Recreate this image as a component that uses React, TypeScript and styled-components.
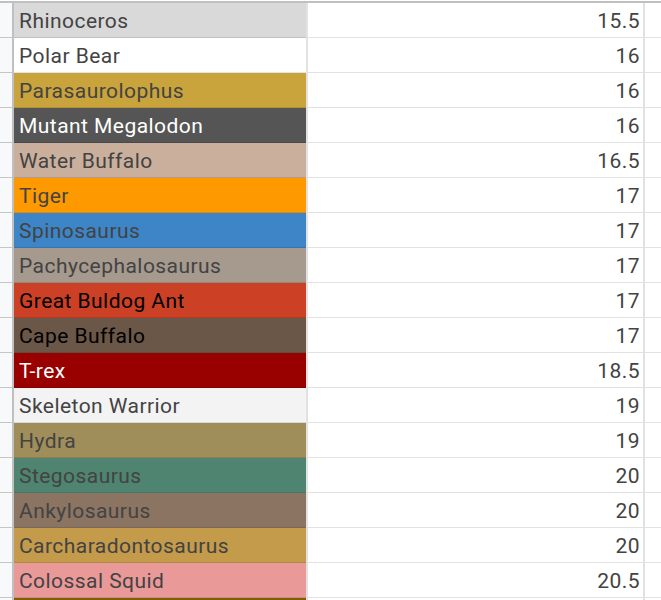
import { createGlobalStyle, styled } from "styled-components";

const GlobalStyle = createGlobalStyle`
  html, body {
    margin: 0;
    padding: 0;
    background: #ffffff;
    overflow: hidden;
  }
  body {
    font-family: Roboto, "Liberation Sans", Arial, sans-serif;
  }
`;

const Sheet = styled.div`
  width: 661px;
  height: 600px;
  overflow: hidden;
  padding-top: 1px;
  box-sizing: border-box;
  background: #ffffff;
`;

const TopRule = styled.div`
  height: 2px;
  background: #c0c0c0;
`;

const Row = styled.div`
  display: grid;
  grid-template-columns: 14px 292px 339px 1fr;
  height: 35px;
`;

const RowHead = styled.div`
  background: #f8f9fa;
  border-right: 2px solid #c0c0c0;
  border-bottom: 1px solid #c4c7c5;
`;

const Text = `
  font-size: 21px;
  letter-spacing: 0.45px;
  padding-top: 2px;
  box-sizing: border-box;
  white-space: nowrap;
  overflow: hidden;
`;

const NameCell = styled.div<{ $bg: string; $ink: string }>`
  ${Text}
  background: ${(p) => p.$bg};
  color: ${(p) => p.$ink};
  border-bottom: 1px solid rgba(0, 0, 0, 0.11);
  display: flex;
  align-items: center;
  padding-left: 5px;
`;

const ValueCell = styled.div`
  ${Text}
  color: #434343;
  border-left: 2px solid #e2e2e2;
  border-right: 2px solid #e2e2e2;
  border-bottom: 1px solid #e2e2e2;
  display: flex;
  align-items: center;
  justify-content: flex-end;
  padding-right: 3px;
`;

const Spare = styled.div`
  border-bottom: 1px solid #e2e2e2;
`;

type Animal = { name: string; value: string; bg: string; ink?: string };

const animals: Animal[] = [
  { name: "Rhinoceros", value: "15.5", bg: "#d9d9d9" },
  { name: "Polar Bear", value: "16", bg: "#ffffff" },
  { name: "Parasaurolophus", value: "16", bg: "#c9a33b" },
  { name: "Mutant Megalodon", value: "16", bg: "#555555", ink: "#ffffff" },
  { name: "Water Buffalo", value: "16.5", bg: "#cab09c" },
  { name: "Tiger", value: "17", bg: "#ff9900" },
  { name: "Spinosaurus", value: "17", bg: "#3d85c6" },
  { name: "Pachycephalosaurus", value: "17", bg: "#a6998d" },
  { name: "Great Buldog Ant", value: "17", bg: "#cc4125", ink: "#000000" },
  { name: "Cape Buffalo", value: "17", bg: "#6b5748", ink: "#000000" },
  { name: "T-rex", value: "18.5", bg: "#990000", ink: "#ffffff" },
  { name: "Skeleton Warrior", value: "19", bg: "#f3f3f3" },
  { name: "Hydra", value: "19", bg: "#a08e5a" },
  { name: "Stegosaurus", value: "20", bg: "#4e8470" },
  { name: "Ankylosaurus", value: "20", bg: "#8b7462" },
  { name: "Carcharadontosaurus", value: "20", bg: "#c49a4b" },
  { name: "Colossal Squid", value: "20.5", bg: "#ea9999" },
  { name: "", value: "", bg: "#7f6000" },
];

export default function App() {
  return (
    <>
      <GlobalStyle />
      <Sheet>
        <TopRule />
        {animals.map((a, i) => (
          <Row key={i}>
            <RowHead />
            <NameCell $bg={a.bg} $ink={a.ink ?? "#434343"}>
              {a.name}
            </NameCell>
            <ValueCell>{a.value}</ValueCell>
            <Spare />
          </Row>
        ))}
      </Sheet>
    </>
  );
}
